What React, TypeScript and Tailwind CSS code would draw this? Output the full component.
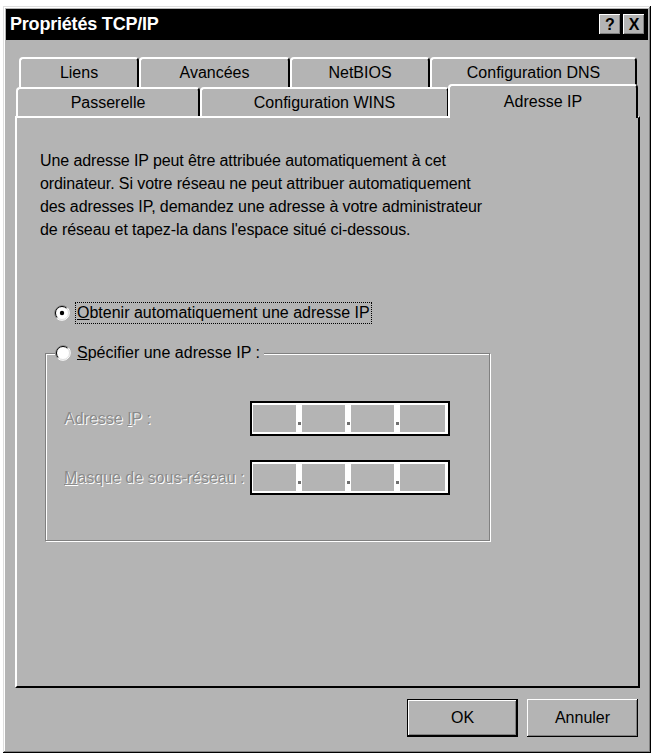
import React from 'react';

const GRAY = 'bg-[#b4b4b4]';

function Radio({ checked }: { checked?: boolean }) {
  return (
    <svg width="16" height="16" viewBox="0 0 16 16" className="shrink-0">
      <circle cx="8" cy="8" r="7" fill="#fff" />
      <path d="M2.7 13.3 A7.5 7.5 0 0 1 13.3 2.7" fill="none" stroke="#808080" strokeWidth="1" />
      <path d="M13.3 2.7 A7.5 7.5 0 0 1 2.7 13.3" fill="none" stroke="#fff" strokeWidth="1" />
      <path d="M3.4 12.6 A6.5 6.5 0 0 1 12.6 3.4" fill="none" stroke="#000" strokeWidth="1" />
      <path d="M12.6 3.4 A6.5 6.5 0 0 1 3.4 12.6" fill="none" stroke="#dfdfdf" strokeWidth="1" />
      {checked && <circle cx="8" cy="8" r="2.2" fill="#000" />}
    </svg>
  );
}

function Tab({ label, w, selected }: { label: string; w: string; selected?: boolean }) {
  if (selected) {
    return (
      <div
        className={`${w} ${GRAY} relative z-10 -mt-[3px] h-[34px] -mx-[1px] flex justify-center pt-[4px] rounded-t-[4px] border-t-2 border-l-2 border-white border-r-2 border-r-black`}
      >
        {label}
      </div>
    );
  }
  return (
    <div
      className={`${w} ${GRAY} h-full flex items-center justify-center rounded-t-[4px] border-t-2 border-l-2 border-white border-r-2 border-r-black`}
    >
      {label}
    </div>
  );
}

function IpField() {
  const cell = 'w-[43px] h-full bg-[#b4b4b4]';
  const sep = (
    <div className="w-[6px] h-full flex items-end justify-center pb-[7px]">
      <div className="w-[3px] h-[3px] bg-[#707070]" />
    </div>
  );
  return (
    <div className="w-[200px] h-[35px] border-2 border-black bg-white pt-[2px] pb-[2px] pl-[1px] flex">
      <div className={cell} />
      {sep}
      <div className={cell} />
      {sep}
      <div className={cell} />
      {sep}
      <div className="w-[45px] h-full bg-[#b4b4b4]" />
    </div>
  );
}

const disabled = 'text-[#8a8a8a] [text-shadow:1px_1px_0_#fff]';

export default function App() {
  return (
    <div className="w-[654px] h-[756px] bg-white pt-[6px] pl-[3px] font-['Liberation_Sans',Arial,sans-serif] text-[16px] text-black">
      <div
        className={`w-[648px] h-[747px] ${GRAY} p-[3px] shadow-[inset_-1px_-1px_#000,inset_1px_1px_#dfdfdf,inset_-2px_-2px_#808080,inset_2px_2px_#fff]`}
      >
        {/* title bar */}
        <div className="h-[31px] bg-black flex items-center justify-between pl-[4px] pr-[3px]">
          <span className="text-white font-bold text-[18px] tracking-[-0.2px]">Propriétés TCP/IP</span>
          <div className="flex gap-[2px]">
            <div className={`w-[22px] h-[21px] ${GRAY} flex items-center justify-center font-bold text-[16px] shadow-[inset_-1px_-1px_#000,inset_1px_1px_#fff,inset_-2px_-2px_#808080]`}>
              ?
            </div>
            <div className={`w-[22px] h-[21px] ${GRAY} flex items-center justify-center font-bold text-[16px] shadow-[inset_-1px_-1px_#000,inset_1px_1px_#fff,inset_-2px_-2px_#808080]`}>
              X
            </div>
          </div>
        </div>

        {/* tabs + panel */}
        <div className="ml-[9px] mt-[17px] w-[625px]">
          <div className="flex h-[30px] pl-[4px]">
            <Tab label="Liens" w="w-[120px]" />
            <Tab label="Avancées" w="w-[151px]" />
            <Tab label="NetBIOS" w="w-[140px]" />
            <Tab label="Configuration DNS" w="w-[207px]" />
          </div>
          <div className="flex h-[29px] pl-[1px]">
            <Tab label="Passerelle" w="w-[184px]" />
            <Tab label="Configuration WINS" w="w-[249px]" />
            <Tab label="Adresse IP" w="w-[190px]" selected />
          </div>

          <div className="h-[572px] border-t-2 border-l-2 border-white border-r-2 border-r-black border-b-2 border-b-black pt-[31px]">
            <p className="ml-[23px] leading-[23px] tracking-[-0.1px]">
              Une adresse IP peut être attribuée automatiquement à cet
              <br />
              ordinateur. Si votre réseau ne peut attribuer automatiquement
              <br />
              des adresses IP, demandez une adresse à votre administrateur
              <br />
              de réseau et tapez-la dans l'espace situé ci-dessous.
            </p>

            <div className="ml-[37px] mt-[60px] h-[24px] flex items-center gap-[5px]">
              <Radio checked />
              <span className="border border-dotted border-black px-[1px] leading-[20px]">
                <span className="underline">O</span>btenir automatiquement une adresse IP
              </span>
            </div>

            <fieldset className="ml-[28px] mt-[16px] w-[445px] h-[200px] border border-[#808080] shadow-[1px_1px_0_#fff,inset_1px_1px_0_#fff] px-[18px]">
              <legend className={`ml-[-9px] ${GRAY} h-[24px] flex items-center gap-[6px] pl-0 pr-[4px]`}>
                <Radio />
                <span>
                  <span className="underline">S</span>pécifier une adresse IP :
                </span>
              </legend>

              <div className="mt-[36px] flex items-center justify-between pr-[21px]">
                <span className={disabled}>
                  Adresse <span className="underline">I</span>P :
                </span>
                <IpField />
              </div>
              <div className="mt-[24px] flex items-center justify-between pr-[21px]">
                <span className={disabled}>
                  <span className="underline">M</span>asque de sous-réseau :
                </span>
                <IpField />
              </div>
            </fieldset>
          </div>
        </div>

        {/* buttons */}
        <div className="mt-[11px] flex justify-end gap-[9px] pr-[10px]">
          <div className="w-[111px] h-[38px] border border-black shadow-[inset_-1px_-1px_#000,inset_1px_1px_#fff,inset_-2px_-2px_#808080] flex items-center justify-center">
            OK
          </div>
          <div className="w-[111px] h-[38px] shadow-[inset_-1px_-1px_#000,inset_1px_1px_#fff,inset_-2px_-2px_#808080] flex items-center justify-center">
            Annuler
          </div>
        </div>
      </div>
    </div>
  );
}
